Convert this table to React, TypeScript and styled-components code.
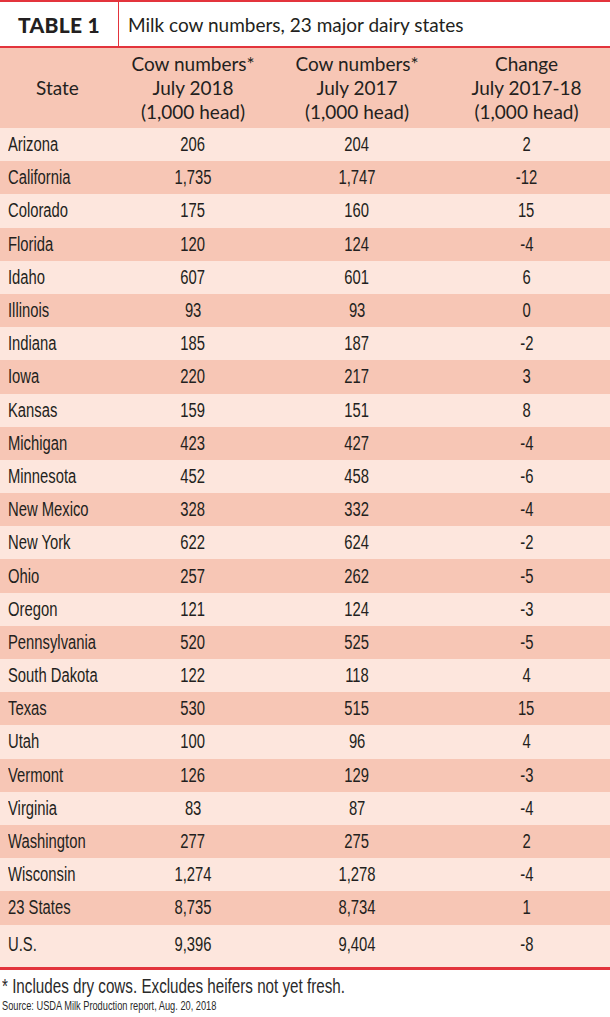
import React from "react";
import styled, { createGlobalStyle } from "styled-components";

const GlobalStyle = createGlobalStyle`
  body {
    margin: 0;
    background: #ffffff;
  }
`;

const Page = styled.div`
  width: 610px;
  color: #231f20;
`;

const TitleBar = styled.div`
  display: flex;
  height: 44px;
  border-top: 2px solid #e3343c;
  border-bottom: 2px solid #e3343c;
`;

const TableLabel = styled.div`
  width: 118px;
  border-right: 1px solid #e3343c;
  display: flex;
  align-items: center;
  justify-content: center;
  font-family: "Lato", "Open Sans", sans-serif;
  font-weight: 900;
  font-size: 21px;
  letter-spacing: 0.3px;
`;

const TableTitle = styled.div`
  display: flex;
  align-items: center;
  padding-left: 9px;
  font-family: "Lato", "Open Sans", sans-serif;
  font-size: 19px;
`;

const Grid = styled.div`
  display: grid;
  grid-template-columns: 115px 156px 172px 1fr;
`;

const HeadCell = styled.div`
  height: 80px;
  background: #f7c6b5;
  display: flex;
  align-items: center;
  justify-content: center;
  text-align: center;
  font-family: "Lato", "Open Sans", sans-serif;
  font-size: 19px;
  line-height: 24px;
`;

const Cell = styled.div<{ $dark: boolean; $tall?: boolean; $left?: boolean }>`
  height: ${(p) => (p.$tall ? "42px" : "33.2px")};
  background: ${(p) => (p.$dark ? "#f7c6b5" : "#fde6dd")};
  display: flex;
  align-items: ${(p) => (p.$tall ? "flex-start" : "center")};
  padding-top: ${(p) => (p.$tall ? "8px" : "0")};
  box-sizing: border-box;
  justify-content: ${(p) => (p.$left ? "flex-start" : "center")};
  padding-left: ${(p) => (p.$left ? "8px" : "0")};
  font-family: "Liberation Sans", Arial, sans-serif;
  font-size: 20px;
  white-space: nowrap;
`;

// Helvetica Condensed look: squeeze Liberation Sans horizontally
const Narrow = styled.span<{ $origin?: string; $scale?: number }>`
  display: inline-block;
  transform: scaleX(${(p) => p.$scale ?? 0.74});
  transform-origin: ${(p) => p.$origin ?? "center"};
`;

const BottomRule = styled.div`
  border-top: 3px solid #e3343c;
`;

const Footnote = styled.div`
  padding: 4px 0 0 2px;
  font-family: "Liberation Sans", Arial, sans-serif;
  font-size: 20px;
  line-height: 24px;
  color: #2a2a2a;
  white-space: nowrap;
`;

const Source = styled.div`
  padding: 0 0 0 2px;
  font-family: "Liberation Sans", Arial, sans-serif;
  font-size: 12.5px;
  line-height: 16px;
  color: #2a2a2a;
  white-space: nowrap;
`;

const rows: [string, string, string, string][] = [
  ["Arizona", "206", "204", "2"],
  ["California", "1,735", "1,747", "-12"],
  ["Colorado", "175", "160", "15"],
  ["Florida", "120", "124", "-4"],
  ["Idaho", "607", "601", "6"],
  ["Illinois", "93", "93", "0"],
  ["Indiana", "185", "187", "-2"],
  ["Iowa", "220", "217", "3"],
  ["Kansas", "159", "151", "8"],
  ["Michigan", "423", "427", "-4"],
  ["Minnesota", "452", "458", "-6"],
  ["New Mexico", "328", "332", "-4"],
  ["New York", "622", "624", "-2"],
  ["Ohio", "257", "262", "-5"],
  ["Oregon", "121", "124", "-3"],
  ["Pennsylvania", "520", "525", "-5"],
  ["South Dakota", "122", "118", "4"],
  ["Texas", "530", "515", "15"],
  ["Utah", "100", "96", "4"],
  ["Vermont", "126", "129", "-3"],
  ["Virginia", "83", "87", "-4"],
  ["Washington", "277", "275", "2"],
  ["Wisconsin", "1,274", "1,278", "-4"],
  ["23 States", "8,735", "8,734", "1"],
  ["U.S.", "9,396", "9,404", "-8"],
];

export default function App() {
  return (
    <Page>
      <GlobalStyle />
      <TitleBar>
        <TableLabel>TABLE 1</TableLabel>
        <TableTitle>Milk cow numbers, 23 major dairy states</TableTitle>
      </TitleBar>
      <Grid>
        <HeadCell>State</HeadCell>
        <HeadCell>
          Cow numbers*
          <br />
          July 2018
          <br />
          (1,000 head)
        </HeadCell>
        <HeadCell>
          Cow numbers*
          <br />
          July 2017
          <br />
          (1,000 head)
        </HeadCell>
        <HeadCell>
          Change
          <br />
          July 2017-18
          <br />
          (1,000 head)
        </HeadCell>
        {rows.map((r, i) => {
          const dark = i % 2 === 1;
          const tall = i === rows.length - 1;
          return r.map((v, j) => (
            <Cell key={`${i}-${j}`} $dark={dark} $tall={tall} $left={j === 0}>
              <Narrow $origin={j === 0 ? "left" : "center"}>{v}</Narrow>
            </Cell>
          ));
        })}
      </Grid>
      <BottomRule />
      <Footnote>
        <Narrow $origin="left" $scale={0.76}>
          * Includes dry cows. Excludes heifers not yet fresh.
        </Narrow>
      </Footnote>
      <Source>
        <Narrow $origin="left">Source: USDA Milk Production report, Aug. 20, 2018</Narrow>
      </Source>
    </Page>
  );
}
